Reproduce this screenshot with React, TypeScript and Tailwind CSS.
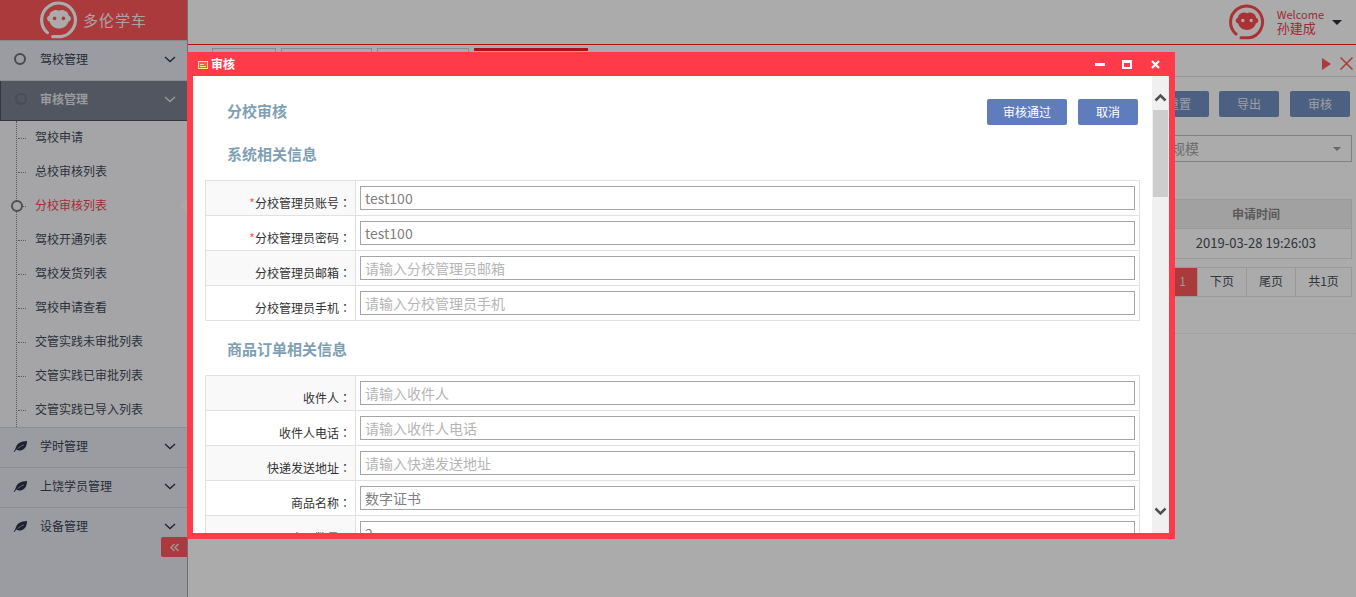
import React from "react";

const font = "font-['Noto_Sans_CJK_SC','Liberation_Sans',sans-serif]";

function Chevron({ className = "" }: { className?: string }) {
  return (
    <svg width="12" height="7" viewBox="0 0 12 7" fill="none" className={className}>
      <path d="M1 1l5 4.600L11 1" stroke="currentColor" strokeWidth="1.300" />
    </svg>
  );
}

function Monkey({ size, stroke, face }: { size: number; stroke: string; face: string }) {
  return (
    <svg width={size} height={size} viewBox="0 0 36 36" fill="none">
      <path d="M7 30A16 16 0 1 1 20 33.800H12" stroke={stroke} strokeWidth="3" strokeLinecap="round" />
      <path
        d="M11 10c2.500-1.800 4.800-2 7-.8 2.200-1.200 4.500-1 7 .8 1.200.9 2 2.300 2.100 3.700 1.400.4 2.200 1.500 2.200 2.900 0 1.500-1 2.700-2.500 3-1 4-4.700 6.400-8.800 6.400s-7.800-2.400-8.800-6.400c-1.500-.3-2.500-1.500-2.500-3 0-1.400.8-2.500 2.200-2.900C9 12.300 9.800 10.900 11 10z"
        fill={stroke}
      />
      <circle cx="13.800" cy="16.500" r="1.700" fill={face} />
      <circle cx="22.200" cy="16.500" r="1.700" fill={face} />
    </svg>
  );
}

function Leaf() {
  return (
    <svg width="14" height="11" viewBox="0 0 14 11" fill="none">
      <path d="M.6 11C1.500 9.600 2.300 8 3 6 4.200 2.200 8 .5 14 0c0 5-2 9-7 9.500C5.500 9.600 4.200 9.200 3.200 8.600L1.500 11z" fill="#2c3448" />
      <path d="M4.500 7.500C6.500 5.800 8.500 4.700 11 3.800" stroke="#a8aeb8" strokeWidth=".8" />
    </svg>
  );
}

function Group({ label, icon, active, last }: { label: string; icon: "circle" | "leaf"; active?: boolean; last?: boolean }) {
  return (
    <div
      className={
        "flex h-10 shrink-0 items-center border-b pb-[3px] " +
        (active
          ? "border-l border-b-[#4b5260] border-l-[#4b5260] bg-[#798090] font-bold text-[#e4e6ea]"
          : (last ? "border-transparent" : "border-[#d0d2da]") + " bg-[#e7e9f0] text-[#3a4254]")
      }
    >
      <div className={"flex justify-center " + (active ? "w-[39px]" : "w-10")}>
        {icon === "circle" ? (
          <span className={"block size-3 rounded-full border-2 " + (active ? "border-[#6f7480]" : "border-[#6f6f6f]")} />
        ) : (
          <Leaf />
        )}
      </div>
      <span className="flex-1 text-xs">{label}</span>
      <Chevron className={"mr-[11px] " + (active ? "text-[#e4e6ea]" : "text-[#2f3648]")} />
    </div>
  );
}

function SubItem({ label, active }: { label: string; active?: boolean }) {
  return (
    <div className="relative flex h-[34px] items-center pb-[2px] pl-[35px] text-xs">
      <span className="absolute left-[18px] top-1/2 w-[8px] border-t border-dotted border-[#888]" />
      {active && <span className="absolute left-[11px] top-[11px] size-3 rounded-full border-2 border-[#777] bg-[#f7f7fa]" />}
      {active && <span className="absolute right-0 top-[10px] border-y-[7px] border-r-[7px] border-y-transparent border-r-[#fdfdfd]" />}
      <span className={active ? "text-[#ee4a50]" : "text-[#444a58]"}>{label}</span>
    </div>
  );
}

function Sidebar() {
  const subs = ["驾校申请", "总校审核列表", "分校审核列表", "驾校开通列表", "驾校发货列表", "驾校申请查看", "交管实践未审批列表", "交管实践已审批列表", "交管实践已导入列表"];
  return (
    <aside className="relative flex w-[188px] shrink-0 flex-col border-r border-[#a5a5a5] bg-[#e7e9f0]">
      <div className="flex h-[41px] shrink-0 items-center gap-[5px] border-b border-[#ccc] bg-[#ff575c] pl-[40px]">
        <Monkey size={38} stroke="#ffffff" face="#ff575c" />
        <span className="pb-[2px] text-[15px] leading-none tracking-[1px] text-[#fbf3f3]">多伦学车</span>
      </div>
      <Group label="驾校管理" icon="circle" />
      <Group label="审核管理" icon="circle" active />
      <div className="relative h-[306px] shrink-0 bg-[#f7f7fa]">
        <span className="absolute bottom-0 left-[16px] top-0 border-l border-dotted border-[#888]" />
        {subs.map((s, i) => (
          <SubItem key={s} label={s} active={i === 2} />
        ))}
      </div>
      <div className="border-t border-[#d0d2da]" />
      <Group label="学时管理" icon="leaf" />
      <Group label="上饶学员管理" icon="leaf" />
      <Group label="设备管理" icon="leaf" last />
      <div className="absolute bottom-[40px] right-0 flex h-5 w-[26px] items-center justify-center rounded-l-[2px] bg-[#ff5660]">
        <svg width="9" height="9" viewBox="0 0 9 9" fill="none" stroke="#f6dcdc" strokeWidth="1.500">
          <path d="M4.500 1L1 4.500 4.500 8M8.500 1L5 4.500 8.500 8" />
        </svg>
      </div>
    </aside>
  );
}

function Page() {
  return (
    <main className="flex min-w-0 flex-1 flex-col bg-white">
      <header className="flex h-[45px] shrink-0 items-center justify-end border-b border-[#ff1a25] pr-[14px]">
        <Monkey size={36} stroke="#ff4a50" face="#ffffff" />
        <div className="ml-[12px] mr-[8px] pb-[3px] text-[13px] leading-[14px] text-[#e8434a]">
          <div className="text-[11px]">Welcome</div>
          <div>孙建成</div>
        </div>
        <span className="border-x-[5px] border-t-[5px] border-x-transparent border-t-[#2a2e3d]" />
      </header>
      <div className="flex h-[32px] shrink-0 items-end border-b border-[#dfdfe6] pl-[24px]">
        <span className="mr-[5px] h-[28px] w-[64px] border border-[#d0d0d0]" />
        <span className="mr-[5px] h-[28px] w-[91px] border border-[#d0d0d0]" />
        <span className="mr-[5px] h-[28px] w-[92px] border border-[#d0d0d0]" />
        <span className="h-[28px] w-[114px] border-t-[3px] border-[#ff1a25]" />
        <div className="ml-auto mr-[3px] flex items-center gap-[9px] self-center pt-[6px]">
          <span className="border-y-[6px] border-l-[9px] border-y-transparent border-l-[#ff575c]" />
          <svg width="13" height="13" viewBox="0 0 13 13" fill="none"><path d="M.5.5l12 12M12.500.5l-12 12" stroke="#ff575c" strokeWidth="1.500" /></svg>
        </div>
      </div>
      <div className="flex h-[40px] shrink-0 items-end justify-end gap-[10px] pr-[6px]">
        {["重置", "导出", "审核"].map((b, i) => (
          <button key={b} className={"h-[26px] w-[60px] rounded-[2px] bg-[#7291c2] text-xs text-[#e8ecf2] " + (i === 2 ? "ml-px" : "")}>{b}</button>
        ))}
      </div>
      <div className="mt-[18px] flex justify-end pr-[4px]">
        <div className="flex h-[27px] w-[400px] items-center justify-between border border-[#c0c0c0] pb-[2px] pl-[218px] pr-[10px] text-sm text-[#a5a5a5]">
          <span>规模</span>
          <span className="mt-[2px] border-x-[4px] border-t-[4px] border-x-transparent border-t-[#999]" />
        </div>
      </div>
      <div className="ml-auto mr-[4px] mt-[37px] w-[400px] text-center text-xs">
        <div className="flex h-[30px] items-center justify-end border border-[#e3e3e3] bg-[#f0f0f0] pr-[71px] font-bold text-[#888]">申请时间</div>
        <div className="flex h-[30px] items-center justify-end border-x border-b border-[#e3e3e3] pb-[2px] pr-[35px] text-[13px] text-[#4a4f5c]">2019-03-28 19:26:03</div>
      </div>
      <div className="ml-auto mr-[4px] mt-[8px] flex h-[30px] w-[400px] justify-end text-xs text-[#4a4f5c]">
        {["1", "下页", "尾页", "共1页"].map((p, i) => (
          <span key={p} className={"flex h-full items-center justify-center border-y border-r border-[#e3e3e3] pb-[2px] " + (i === 0 ? "w-[30px] bg-[#ff575c] text-[#f5dede]" : i === 3 ? "w-[56px]" : "w-[49px]")}>{p}</span>
        ))}
      </div>
      <div className="mt-[36px] border-t border-dotted border-[#e5e5e5]" />
    </main>
  );
}

function Row({ label, value, placeholder, req, shaded }: { label: string; value?: string; placeholder?: string; req?: boolean; shaded?: boolean }) {
  return (
    <div className="flex h-[35px] shrink-0 border-b border-[#e1e1e1]">
      <div className={"flex w-[150px] shrink-0 items-end justify-end border-r border-[#e1e1e1] pb-[4px] pr-[4px] text-xs text-[#333] " + (shaded ? "bg-[#f9f9f9]" : "bg-white")}>
        {req && <span className="text-[#ff5a4a]">*</span>}
        {label}
        <span className="font-['Noto_Sans_CJK_TC',sans-serif]">：</span>
      </div>
      <div className="flex flex-1 items-center px-[4px]">
        <div className={"flex h-[24px] w-full items-center border border-[#a5a5a5] pl-[4px] text-sm " + (value ? "text-[#808080]" : "text-[#b5b5b5]")}>
          {value ?? placeholder}
        </div>
      </div>
    </div>
  );
}

function Section({ title, className, children }: { title: string; className: string; children: React.ReactNode }) {
  return (
    <>
      <h3 className={"ml-[34px] text-[15px] font-bold leading-[20px] text-[#7f9fb5] " + className}>{title}</h3>
      <div className="ml-[12px] flex w-[935px] flex-col border-x border-t border-[#e1e1e1]">{children}</div>
    </>
  );
}

function Dialog() {
  return (
    <div className="absolute left-[187px] top-[52px] flex h-[487px] w-[988px] flex-col border-x-[6px] border-b-[6px] border-[#ff3b4a] bg-[#ff3b4a]">
      <div className="flex h-[24px] shrink-0 items-center text-xs text-white">
        <svg width="10" height="8" viewBox="0 0 10 8" className="ml-[5px] mr-[3px] mt-[1px]" fill="none">
          <rect x=".5" y=".5" width="9" height="7" fill="#ffffff22" stroke="#ffe680" />
          <path d="M2 3.500h4M2 5.500h6" stroke="#ffe680" />
        </svg>
        <span className="font-bold">审核</span>
        <div className="ml-auto flex items-center pr-[9px]">
          <span className="h-[3px] w-[10px] bg-white" />
          <span className="ml-[17px] h-[9px] w-[10px] border-2 border-t-[3px] border-white" />
          <svg width="9" height="9" viewBox="0 0 9 9" fill="none" className="ml-[19px]"><path d="M1 1l7 7M8 1l-7 7" stroke="#fff" strokeWidth="2.200" /></svg>
        </div>
      </div>
      <div className="flex min-h-0 flex-1 bg-white">
        <div className="min-w-0 flex-1 overflow-hidden">
          <div className="flex items-start pt-[23px]">
            <h2 className="ml-[34px] mt-[2px] text-[15px] font-bold leading-[20px] text-[#7f9fb5]">分校审核</h2>
            <div className="ml-auto mr-[14px] flex gap-[11px]">
              <button className="h-[26px] w-[80px] rounded-[2px] bg-[#5f7dbd] text-xs text-white">审核通过</button>
              <button className="h-[26px] w-[60px] rounded-[2px] bg-[#5f7dbd] text-xs text-white">取消</button>
            </div>
          </div>
          <Section title="系统相关信息" className="mb-[16px] mt-[19px]">
            <Row label="分校管理员账号" value="test100" req shaded />
            <Row label="分校管理员密码" value="test100" req />
            <Row label="分校管理员邮箱" placeholder="请输入分校管理员邮箱" shaded />
            <Row label="分校管理员手机" placeholder="请输入分校管理员手机" />
          </Section>
          <Section title="商品订单相关信息" className="mb-[16px] mt-[18px]">
            <Row label="收件人" placeholder="请输入收件人" shaded />
            <Row label="收件人电话" placeholder="请输入收件人电话" />
            <Row label="快递发送地址" placeholder="请输入快递发送地址" shaded />
            <Row label="商品名称" value="数字证书" />
            <Row label="商品数量" value="2" shaded />
          </Section>
        </div>
        <div className="flex w-[17px] shrink-0 flex-col items-center bg-[#f0f0f0]">
          <div className="flex h-[34px] w-full shrink-0 items-end justify-center pb-[8px]">
            <svg width="13" height="9" viewBox="0 0 13 9" fill="none"><path d="M1.500 7.500l5-5 5 5" stroke="#505050" strokeWidth="2.500" /></svg>
          </div>
          <div className="h-[87px] w-[15px] shrink-0 bg-[#cdcdcd]" />
          <div className="mt-auto flex h-[34px] w-full items-start justify-center pt-[8px]">
            <svg width="13" height="9" viewBox="0 0 13 9" fill="none"><path d="M1.500 1.500l5 5 5-5" stroke="#505050" strokeWidth="2.500" /></svg>
          </div>
        </div>
      </div>
    </div>
  );
}

export default function App() {
  return (
    <div className={"relative flex h-[597px] w-[1356px] overflow-hidden bg-white " + font}>
      <Sidebar />
      <Page />
      <div className="absolute inset-0 bg-black/33" />
      <Dialog />
    </div>
  );
}
